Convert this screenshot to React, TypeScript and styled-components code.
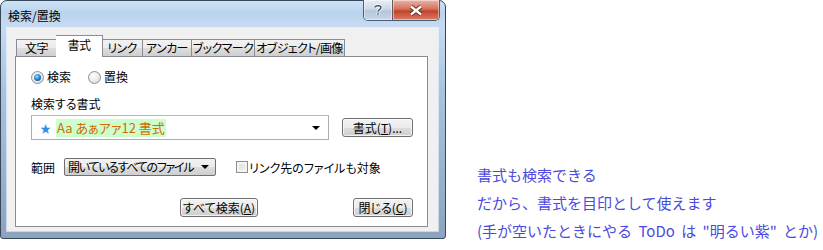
import styled, { createGlobalStyle } from "styled-components"

const GlobalStyle = createGlobalStyle`
  html, body {
    margin: 0;
    padding: 0;
    background: #ffffff;
  }
  body {
    font-family: "Noto Sans CJK JP", "Liberation Sans", sans-serif;
    font-size: 12px;
    color: #000;
  }
`

const Page = styled.div`
  display: flex;
  align-items: flex-start;
  width: 823px;
  height: 250px;
  overflow: hidden;
`

const Window = styled.div`
  box-sizing: border-box;
  width: 446px;
  height: 239px;
  border: 1px solid #37475a;
  border-radius: 7px 7px 3px 3px;
  padding: 0 7px 7px 6px;
  display: flex;
  flex-direction: column;
  background: linear-gradient(
    to bottom,
    #cfe2f6 0px,
    #b9d3ee 12px,
    #c6dbf2 24px,
    #a9c3df 90px,
    #8ba3bf 239px
  );
  flex-shrink: 0;
`

const TitleBar = styled.div`
  height: 27px;
  display: flex;
  align-items: flex-start;
  justify-content: space-between;
`

const Title = styled.div`
  padding: 7px 0 0 1px;
  line-height: 16px;
  font-feature-settings: "palt";
`

const CaptionButtons = styled.div`
  display: flex;
  margin-top: -1px;
  margin-right: -2px;
  height: 20px;
  border: 1px solid #4a5d75;
  border-top: 0;
  border-radius: 0 0 5px 5px;
  overflow: hidden;
`

const CaptionButton = styled.div<{ $close?: boolean }>`
  width: ${p => (p.$close ? 46 : 28)}px;
  display: flex;
  align-items: center;
  justify-content: center;
  background: ${p =>
    p.$close
      ? "linear-gradient(to bottom, #e9b3a6 0%, #d6715c 45%, #c2432b 55%, #d97d66 100%)"
      : "linear-gradient(to bottom, #e6eef7 0%, #cbd8e7 45%, #b4c6da 55%, #c8d7e8 100%)"};
  border-left: ${p => (p.$close ? "1px solid #6b5a5a" : "0")};
  box-shadow: inset 0 0 0 1px rgba(255, 255, 255, 0.45);
`

const Client = styled.div`
  flex: 1;
  background: #f0f0f0;
  box-shadow: 0 0 0 1px rgba(255, 255, 255, 0.55);
  display: flex;
  flex-direction: column;
  padding: 7px 10px 4px 8px;
  font-feature-settings: "palt";
`

const TabStrip = styled.div`
  display: flex;
  align-items: flex-end;
  height: 22px;
  padding-left: 1px;
  position: relative;
  z-index: 1;
  margin-bottom: -1px;
`

const Tab = styled.div<{ $active?: boolean; $w: number }>`
  box-sizing: border-box;
  width: ${p => p.$w}px;
  height: ${p => (p.$active ? 22 : 18)}px;
  border: 1px solid #898c95;
  border-bottom: ${p => (p.$active ? "0" : "1px solid #898c95")};
  margin-left: ${p => (p.$active ? -1 : 0)}px;
  margin-right: ${p => (p.$active ? -1 : 0)}px;
  background: ${p =>
    p.$active
      ? "#ffffff"
      : "linear-gradient(to bottom, #f2f2f2 0%, #ebebeb 50%, #dddddd 51%, #cfcfcf 100%)"};
  display: flex;
  align-items: center;
  justify-content: center;
  line-height: 14px;
  white-space: nowrap;
  letter-spacing: -0.6px;
  padding-bottom: ${p => (p.$active ? 3 : 0)}px;
  position: relative;
  z-index: ${p => (p.$active ? 2 : 1)};
  & + & {
    border-left: ${p => (p.$active ? "1px solid #898c95" : "0")};
  }
`

const Panel = styled.div`
  flex: 1;
  background: #ffffff;
  border: 1px solid #898c95;
  display: flex;
  flex-direction: column;
  padding: 13px 14px 0 15px;
`

const RadioRow = styled.div`
  display: flex;
  align-items: center;
  height: 14px;
  gap: 17px;
`

const RadioItem = styled.label`
  display: flex;
  align-items: center;
  gap: 3px;
  line-height: 14px;
`

const RadioCircle = styled.span<{ $checked?: boolean }>`
  box-sizing: border-box;
  width: 13px;
  height: 13px;
  border-radius: 50%;
  border: 1px solid #8e8f8f;
  background: radial-gradient(circle at 40% 35%, #ffffff 0%, #e6e6e6 60%, #cfcfcf 100%);
  display: flex;
  align-items: center;
  justify-content: center;
  &::after {
    content: "";
    width: 7px;
    height: 7px;
    border-radius: 50%;
    display: ${p => (p.$checked ? "block" : "none")};
    background: radial-gradient(circle at 40% 35%, #9fe0ff 0%, #2a8ad4 45%, #0b3f74 100%);
  }
`

const FieldLabel = styled.div`
  margin-top: 12px;
  line-height: 16px;
`

const ComboRow = styled.div`
  display: flex;
  align-items: center;
  margin-top: 3px;
  gap: 13px;
`

const Combo = styled.div`
  box-sizing: border-box;
  width: 298px;
  height: 25px;
  border: 1px solid #abadb3;
  border-top-color: #b5b7bd;
  background: #ffffff;
  display: flex;
  align-items: center;
  padding: 0 8px 0 8px;
`

const Star = styled.span`
  color: #2f8fe8;
  font-size: 11px;
  width: 16px;
`

const Sample = styled.span`
  background: #ccffcc;
  color: #d36b00;
  font-size: 13px;
  line-height: 18px;
  padding: 0 1px;
`

const Arrow = styled.span`
  margin-left: auto;
  flex-shrink: 0;
  width: 0;
  height: 0;
  border-left: 4px solid transparent;
  border-right: 4px solid transparent;
  border-top: 4px solid #000;
`

const Button = styled.div<{ $w: number }>`
  box-sizing: border-box;
  width: ${p => p.$w}px;
  height: 19px;
  border: 1px solid #707070;
  border-radius: 3px;
  background: linear-gradient(to bottom, #f2f2f2 0%, #ebebeb 50%, #dddddd 51%, #cfcfcf 100%);
  box-shadow: inset 0 0 0 1px rgba(255, 255, 255, 0.7);
  display: flex;
  align-items: center;
  justify-content: center;
  line-height: 14px;
  white-space: nowrap;
  u {
    text-underline-offset: 1px;
  }
`

const RangeRow = styled.div`
  display: flex;
  align-items: center;
  margin-top: 18px;
  height: 18px;
`

const Select = styled.div`
  box-sizing: border-box;
  width: 152px;
  height: 18px;
  margin-left: 9px;
  border: 1px solid #707070;
  border-radius: 2px;
  background: linear-gradient(to bottom, #f2f2f2 0%, #ebebeb 50%, #dddddd 51%, #cfcfcf 100%);
  display: flex;
  align-items: center;
  padding: 0 6px 0 3px;
  line-height: 14px;
  white-space: nowrap;
  letter-spacing: -1.3px;
`

const Check = styled.span`
  box-sizing: border-box;
  width: 12px;
  height: 12px;
  margin-left: 20px;
  border: 1px solid #8e8f8f;
  background: linear-gradient(135deg, #dcdcdc 0%, #f4f4f4 100%);
  box-shadow: inset 0 0 0 2px #f4f4f4;
`

const CheckLabel = styled.span`
  margin-left: 1px;
  white-space: nowrap;
`

const ButtonRow = styled.div`
  display: flex;
  justify-content: flex-end;
  gap: 95px;
  margin-top: 22px;
`

const Notes = styled.div`
  margin-left: 31px;
  padding-top: 161px;
  color: #4a4ae0;
  font-size: 15px;
  line-height: 28px;
  white-space: nowrap;
  word-spacing: 3px;
`

const tabs = [
  { label: "文字", w: 41 },
  { label: "書式", w: 47, active: true },
  { label: "リンク", w: 41 },
  { label: "アンカー", w: 49 },
  { label: "ブックマーク", w: 63 },
  { label: "オブジェクト/画像", w: 90 },
]

export default function App() {
  return (
    <>
      <GlobalStyle />
      <Page>
        <Window>
          <TitleBar>
            <Title>検索/置換</Title>
            <CaptionButtons>
              <CaptionButton>
                <svg width="10" height="12" viewBox="0 0 10 12">
                  <path
                    d="M2 3.5 C2 1.2 8 1.2 8 3.8 C8 5.6 5 5.6 5 7.6 M5 9.3 L5 10.8"
                    fill="none"
                    stroke="#ffffff"
                    strokeWidth="3.2"
                  />
                  <path
                    d="M2 3.5 C2 1.2 8 1.2 8 3.8 C8 5.6 5 5.6 5 7.6 M5 9.3 L5 10.8"
                    fill="none"
                    stroke="#3d4e63"
                    strokeWidth="1.4"
                  />
                </svg>
              </CaptionButton>
              <CaptionButton $close>
                <svg width="14" height="11" viewBox="0 0 14 11">
                  <path d="M2 1.5 L12 9.5 M12 1.5 L2 9.5" stroke="#5a2a22" strokeWidth="4.2" />
                  <path d="M2 1.5 L12 9.5 M12 1.5 L2 9.5" stroke="#ffffff" strokeWidth="2.4" />
                </svg>
              </CaptionButton>
            </CaptionButtons>
          </TitleBar>
          <Client>
            <TabStrip>
              {tabs.map(t => (
                <Tab key={t.label} $active={t.active} $w={t.w}>
                  {t.label}
                </Tab>
              ))}
            </TabStrip>
            <Panel>
              <RadioRow>
                <RadioItem>
                  <RadioCircle $checked />
                  検索
                </RadioItem>
                <RadioItem>
                  <RadioCircle />
                  置換
                </RadioItem>
              </RadioRow>
              <FieldLabel>検索する書式</FieldLabel>
              <ComboRow>
                <Combo>
                  <Star>★</Star>
                  <Sample>Aa あぁアァ12 書式</Sample>
                  <Arrow />
                </Combo>
                <Button $w={71}>
                  書式(<u>T</u>)...
                </Button>
              </ComboRow>
              <RangeRow>
                <span>範囲</span>
                <Select>
                  開いているすべてのファイル
                  <Arrow />
                </Select>
                <Check />
                <CheckLabel>リンク先のファイルも対象</CheckLabel>
              </RangeRow>
              <ButtonRow>
                <Button $w={78}>
                  すべて検索(<u>A</u>)
                </Button>
                <Button $w={60}>
                  閉じる(<u>C</u>)
                </Button>
              </ButtonRow>
            </Panel>
          </Client>
        </Window>
        <Notes>
          <div>書式も検索できる</div>
          <div>だから、書式を目印として使えます</div>
          <div>(手が空いたときにやる ToDo は "明るい紫" とか)</div>
        </Notes>
      </Page>
    </>
  )
}
